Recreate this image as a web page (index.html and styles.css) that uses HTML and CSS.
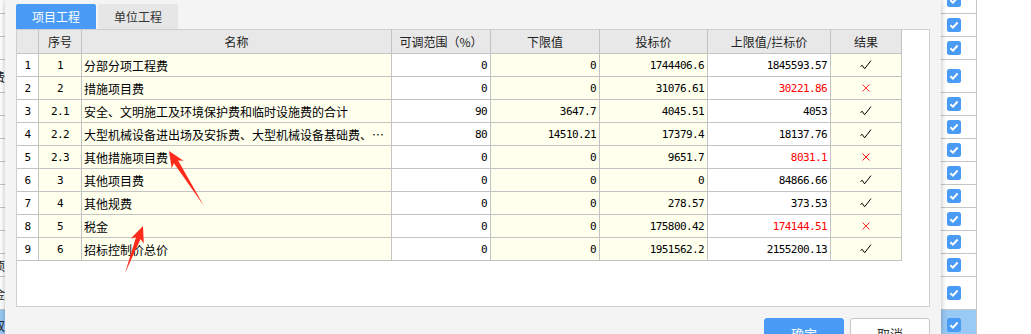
FILE: index.html
```html
<!DOCTYPE html>
<html lang="zh-CN">
<head>
<meta charset="utf-8">
<title>招标控制价</title>
<link rel="stylesheet" href="styles.css">
</head>
<body>
<div class="screen">
  <div class="bg-strip bg-left">
    <div class="bg-row r-first"></div>
    <div class="bg-row"></div>
    <div class="bg-row"></div>
    <div class="bg-row r-tall"><span class="frag">费</span></div>
    <div class="bg-row"></div>
    <div class="bg-row"></div>
    <div class="bg-row"></div>
    <div class="bg-row"></div>
    <div class="bg-row"></div>
    <div class="bg-row"></div>
    <div class="bg-row"></div>
    <div class="bg-row"><span class="frag">项</span></div>
    <div class="bg-row r-tall"><span class="frag">金</span></div>
    <div class="bg-row r-sel"><span class="frag">双</span></div>
  </div>

  <div class="dialog">
    <div class="tabs">
      <div class="tab active">项目工程</div>
      <div class="tab">单位工程</div>
    </div>
    <div class="panel">
      <div class="grid">
        <div class="c h"></div>
        <div class="c h">序号</div>
        <div class="c h">名称</div>
        <div class="c h">可调范围（%）</div>
        <div class="c h">下限值</div>
        <div class="c h">投标价</div>
        <div class="c h">上限值/拦标价</div>
        <div class="c h">结果</div>

        <div class="c ctr num">1</div><div class="c y ctr num">1</div><div class="c y name">分部分项工程费</div><div class="c r num">0</div><div class="c y r num">0</div><div class="c y r num">1744406.6</div><div class="c r num">1845593.57</div><div class="c y ctr"><svg class="ok" width="12" height="10" viewBox="0 0 12 10"><path d="M0.5 6.5 L2.2 5.3 L4.6 8.8 L11 0.6" fill="none" stroke="#000" stroke-width="1"/></svg></div>

        <div class="c ctr num">2</div><div class="c y ctr num">2</div><div class="c y name">措施项目费</div><div class="c r num">0</div><div class="c y r num">0</div><div class="c y r num">31076.61</div><div class="c r num red">30221.86</div><div class="c y ctr"><svg class="bad" width="8" height="8" viewBox="0 0 8 8"><path d="M0.5 0.5 L7.5 7.5 M7.5 0.5 L0.5 7.5" fill="none" stroke="#ff3030" stroke-width="1"/></svg></div>

        <div class="c ctr num">3</div><div class="c y ctr num">2.1</div><div class="c y name">安全、文明施工及环境保护费和临时设施费的合计</div><div class="c r num">90</div><div class="c y r num">3647.7</div><div class="c y r num">4045.51</div><div class="c r num">4053</div><div class="c y ctr"><svg class="ok" width="12" height="10" viewBox="0 0 12 10"><path d="M0.5 6.5 L2.2 5.3 L4.6 8.8 L11 0.6" fill="none" stroke="#000" stroke-width="1"/></svg></div>

        <div class="c ctr num">4</div><div class="c y ctr num">2.2</div><div class="c y name">大型机械设备进出场及安拆费、大型机械设备基础费、…</div><div class="c r num">80</div><div class="c y r num">14510.21</div><div class="c y r num">17379.4</div><div class="c r num">18137.76</div><div class="c y ctr"><svg class="ok" width="12" height="10" viewBox="0 0 12 10"><path d="M0.5 6.5 L2.2 5.3 L4.6 8.8 L11 0.6" fill="none" stroke="#000" stroke-width="1"/></svg></div>

        <div class="c ctr num">5</div><div class="c y ctr num">2.3</div><div class="c y name">其他措施项目费</div><div class="c r num">0</div><div class="c y r num">0</div><div class="c y r num">9651.7</div><div class="c r num red">8031.1</div><div class="c y ctr"><svg class="bad" width="8" height="8" viewBox="0 0 8 8"><path d="M0.5 0.5 L7.5 7.5 M7.5 0.5 L0.5 7.5" fill="none" stroke="#ff1010" stroke-width="1"/></svg></div>

        <div class="c ctr num">6</div><div class="c y ctr num">3</div><div class="c y name">其他项目费</div><div class="c r num">0</div><div class="c y r num">0</div><div class="c y r num">0</div><div class="c r num">84866.66</div><div class="c y ctr"><svg class="ok" width="12" height="10" viewBox="0 0 12 10"><path d="M0.5 6.5 L2.2 5.3 L4.6 8.8 L11 0.6" fill="none" stroke="#000" stroke-width="1"/></svg></div>

        <div class="c ctr num">7</div><div class="c y ctr num">4</div><div class="c y name">其他规费</div><div class="c r num">0</div><div class="c y r num">0</div><div class="c y r num">278.57</div><div class="c r num">373.53</div><div class="c y ctr"><svg class="ok" width="12" height="10" viewBox="0 0 12 10"><path d="M0.5 6.5 L2.2 5.3 L4.6 8.8 L11 0.6" fill="none" stroke="#000" stroke-width="1"/></svg></div>

        <div class="c ctr num">8</div><div class="c y ctr num">5</div><div class="c y name">税金</div><div class="c r num">0</div><div class="c y r num">0</div><div class="c y r num">175800.42</div><div class="c r num red">174144.51</div><div class="c y ctr"><svg class="bad" width="8" height="8" viewBox="0 0 8 8"><path d="M0.5 0.5 L7.5 7.5 M7.5 0.5 L0.5 7.5" fill="none" stroke="#ff3030" stroke-width="1"/></svg></div>

        <div class="c ctr num">9</div><div class="c y ctr num">6</div><div class="c y name">招标控制价总价</div><div class="c r num">0</div><div class="c y r num">0</div><div class="c y r num">1951562.2</div><div class="c r num">2155200.13</div><div class="c y ctr"><svg class="ok" width="12" height="10" viewBox="0 0 12 10"><path d="M0.5 6.5 L2.2 5.3 L4.6 8.8 L11 0.6" fill="none" stroke="#000" stroke-width="1"/></svg></div>
      </div>
    </div>
    <div class="actions">
      <button class="btn primary">确定</button>
      <button class="btn">取消</button>
    </div>
  </div>

  <div class="bg-right">
    <div class="bg-strip check-col">
      <div class="bg-row r-first"><svg class="cb" width="14" height="14" viewBox="0 0 14 14"><rect width="14" height="14" rx="2.5" fill="#4a9bf5"/><path d="M3.4 7.2 L5.9 9.6 L10.6 4.5" fill="none" stroke="#fff" stroke-width="2"/></svg></div>
      <div class="bg-row"><svg class="cb" width="14" height="14" viewBox="0 0 14 14"><rect width="14" height="14" rx="2.5" fill="#4a9bf5"/><path d="M3.4 7.2 L5.9 9.6 L10.6 4.5" fill="none" stroke="#fff" stroke-width="2"/></svg></div>
      <div class="bg-row"><svg class="cb" width="14" height="14" viewBox="0 0 14 14"><rect width="14" height="14" rx="2.5" fill="#4a9bf5"/><path d="M3.4 7.2 L5.9 9.6 L10.6 4.5" fill="none" stroke="#fff" stroke-width="2"/></svg></div>
      <div class="bg-row r-tall"><svg class="cb" width="14" height="14" viewBox="0 0 14 14"><rect width="14" height="14" rx="2.5" fill="#4a9bf5"/><path d="M3.4 7.2 L5.9 9.6 L10.6 4.5" fill="none" stroke="#fff" stroke-width="2"/></svg></div>
      <div class="bg-row"><svg class="cb" width="14" height="14" viewBox="0 0 14 14"><rect width="14" height="14" rx="2.5" fill="#4a9bf5"/><path d="M3.4 7.2 L5.9 9.6 L10.6 4.5" fill="none" stroke="#fff" stroke-width="2"/></svg></div>
      <div class="bg-row"><svg class="cb" width="14" height="14" viewBox="0 0 14 14"><rect width="14" height="14" rx="2.5" fill="#4a9bf5"/><path d="M3.4 7.2 L5.9 9.6 L10.6 4.5" fill="none" stroke="#fff" stroke-width="2"/></svg></div>
      <div class="bg-row"><svg class="cb" width="14" height="14" viewBox="0 0 14 14"><rect width="14" height="14" rx="2.5" fill="#4a9bf5"/><path d="M3.4 7.2 L5.9 9.6 L10.6 4.5" fill="none" stroke="#fff" stroke-width="2"/></svg></div>
      <div class="bg-row"><svg class="cb" width="14" height="14" viewBox="0 0 14 14"><rect width="14" height="14" rx="2.5" fill="#4a9bf5"/><path d="M3.4 7.2 L5.9 9.6 L10.6 4.5" fill="none" stroke="#fff" stroke-width="2"/></svg></div>
      <div class="bg-row"><svg class="cb" width="14" height="14" viewBox="0 0 14 14"><rect width="14" height="14" rx="2.5" fill="#4a9bf5"/><path d="M3.4 7.2 L5.9 9.6 L10.6 4.5" fill="none" stroke="#fff" stroke-width="2"/></svg></div>
      <div class="bg-row"><svg class="cb" width="14" height="14" viewBox="0 0 14 14"><rect width="14" height="14" rx="2.5" fill="#4a9bf5"/><path d="M3.4 7.2 L5.9 9.6 L10.6 4.5" fill="none" stroke="#fff" stroke-width="2"/></svg></div>
      <div class="bg-row"><svg class="cb" width="14" height="14" viewBox="0 0 14 14"><rect width="14" height="14" rx="2.5" fill="#4a9bf5"/><path d="M3.4 7.2 L5.9 9.6 L10.6 4.5" fill="none" stroke="#fff" stroke-width="2"/></svg></div>
      <div class="bg-row"><svg class="cb" width="14" height="14" viewBox="0 0 14 14"><rect width="14" height="14" rx="2.5" fill="#4a9bf5"/><path d="M3.4 7.2 L5.9 9.6 L10.6 4.5" fill="none" stroke="#fff" stroke-width="2"/></svg></div>
      <div class="bg-row r-tall"><svg class="cb" width="14" height="14" viewBox="0 0 14 14"><rect width="14" height="14" rx="2.5" fill="#4a9bf5"/><path d="M3.4 7.2 L5.9 9.6 L10.6 4.5" fill="none" stroke="#fff" stroke-width="2"/></svg></div>
      <div class="bg-row r-sel"><svg class="cb" width="14" height="14" viewBox="0 0 14 14"><rect width="14" height="14" rx="2.5" fill="#4a9bf5"/><path d="M3.4 7.2 L5.9 9.6 L10.6 4.5" fill="none" stroke="#fff" stroke-width="2"/></svg></div>
    </div>
  </div>
</div>

<svg class="arrows" width="1031" height="334" viewBox="0 0 1031 334">
  <polygon points="169,151 183.5,160.7 178.1,160.6 204,206 173.9,163.3 171.7,168.3" fill="#ff2a1a"/>
  <polygon points="143,226 143.8,243.4 140.6,239 125,273 136,237.2 130.8,238.4" fill="#ff2a1a"/>
</svg>
</body>
</html>
```

FILE: styles.css
```css
* {
  box-sizing: border-box;
  margin: 0;
  padding: 0;
}

html, body {
  width: 1031px;
  height: 334px;
  overflow: hidden;
  background: #fff;
}

body {
  font-family: "Noto Sans CJK SC", "Noto Sans", sans-serif;
  font-size: 12px;
  color: #000;
  position: relative;
}

.screen {
  display: flex;
  height: 334px;
}

/* background window strips */
.bg-strip {
  display: flex;
  flex-direction: column;
  flex: none;
}

.bg-row {
  flex: none;
  height: 23px;
  border-bottom: 1px solid #c6c6c6;
  display: flex;
  align-items: center;
}

.bg-row.r-first {
  height: 14px;
}

.bg-row.r-tall {
  height: 33px;
}

.bg-row.r-sel {
  height: 30px;
  border-bottom: none;
  background: #99c9f5;
}

.bg-left {
  width: 5px;
  overflow: hidden;
  background: #fff;
}

.bg-left .bg-row {
  justify-content: flex-end;
}

.frag {
  white-space: nowrap;
  color: #222;
  font-size: 12px;
}

.bg-right {
  flex: 1;
  background: #fff;
}

.check-col {
  width: 36px;
  border-right: 1px solid #c6c6c6;
}

.check-col .bg-row {
  padding-left: 6px;
}

.check-col .bg-row.r-first {
  align-items: flex-end;
  padding-bottom: 6px;
}

.cb {
  display: block;
  flex: none;
}

/* dialog */
.dialog {
  width: 936px;
  flex: none;
  background: #f4f4f4;
  padding: 4px 11px 0;
  box-shadow: 0 0 6px rgba(0, 0, 0, 0.28);
  position: relative;
  z-index: 1;
  display: flex;
  flex-direction: column;
}

.tabs {
  flex: none;
  display: flex;
  gap: 2px;
  height: 25px;
}

.tab {
  width: 80px;
  display: flex;
  align-items: center;
  justify-content: center;
  background: #e6e6e6;
  color: #333;
  border-radius: 2px 2px 0 0;
  font-size: 12px;
}

.tab.active {
  background: #4a9bf5;
  color: #fff;
}

.panel {
  flex: none;
  height: 278px;
  background: #fff;
  border: 1px solid #cfcfcf;
}

.grid {
  display: grid;
  grid-template-columns: 22px 43px 310px 99px 109px 108px 123px 71px;
  width: 885px;
}

.c {
  height: 23px;
  border-right: 1px solid #c3c3c3;
  border-bottom: 1px solid #c3c3c3;
  display: flex;
  align-items: center;
  white-space: nowrap;
  overflow: hidden;
  background: #fff;
}

.c.h {
  height: 24px;
  background: #e8e8e8;
  justify-content: center;
  color: #222;
}

.c.y {
  background: #ffffee;
}

.num {
  font-family: "DejaVu Sans Mono", "Liberation Mono", monospace;
  font-size: 11px;
  letter-spacing: -0.6px;
}

.r {
  justify-content: flex-end;
  padding-right: 3px;
}

.ctr {
  justify-content: center;
}

.name {
  padding-left: 2px;
}

.red {
  color: #ff0000;
}

.ok, .bad {
  display: block;
}

/* buttons */
.actions {
  flex: none;
  display: flex;
  justify-content: flex-end;
  gap: 6px;
  margin-top: 11px;
}

.btn {
  flex: none;
  width: 80px;
  height: 30px;
  border-radius: 3px;
  border: 1px solid #c8c8c8;
  background: #fff;
  color: #333;
  font-family: "Noto Sans CJK SC", sans-serif;
  font-size: 13px;
}

.btn.primary {
  background: #4a9bf5;
  border-color: #4a9bf5;
  color: #fff;
}

/* annotation arrows */
.arrows {
  position: absolute;
  left: 0;
  top: 0;
  pointer-events: none;
  z-index: 5;
}
```
